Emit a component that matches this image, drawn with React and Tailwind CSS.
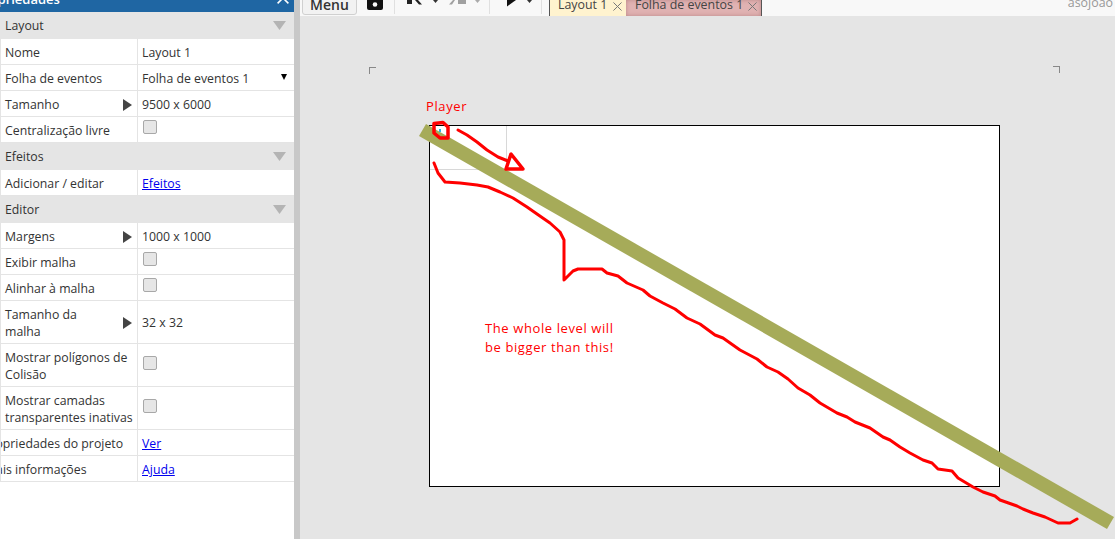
import React from 'react';

const font = 'font-["Open_Sans","Liberation_Sans",sans-serif]';

const Caret = () => (
    <svg width="10" height="12" viewBox="0 0 10 12" className="shrink-0">
        <path d="M1 0 L10 6 L1 12 Z" fill="#444" />
    </svg>
);

const Check = () => (
    <span className="block h-[14px] w-[14px] rounded-[2px] border border-[#a8a8a8] bg-[#e6e6e6]" />
);

const Cross = ({ color = '#777', size = 9, width = 1.1 }) => (
    <svg width={size} height={size} viewBox="0 0 10 10" className="shrink-0">
        <path d="M0.5 0.5 L9.5 9.5 M9.5 0.5 L0.5 9.5" stroke={color} strokeWidth={width} fill="none" />
    </svg>
);

const Section = ({ title }) => (
    <div className="flex h-[27px] items-center justify-between border-b border-[#e5e5e5] bg-[#e5e5e5] pl-[5px] pr-2 text-[#333]">
        <span className="mt-[2px]">{title}</span>
        <svg width="13" height="9" viewBox="0 0 13 9"><path d="M0 0 H13 L6.5 9 Z" fill="#b4b4b4" /></svg>
    </div>
);

const Row = ({ label, children, caret, h = 'h-[26px]', clip }) => (
    <div className={`flex ${h} border-b border-[#e4e4e4] bg-white`}>
        <div className="flex w-[138px] shrink-0 items-center justify-between overflow-hidden border-x border-[#e4e4e4] pl-[4px] pr-[5px] pt-[2px] leading-[17px] text-[#333]">
            <span
                className={clip ? 'whitespace-nowrap' : caret ? 'max-w-[100px]' : 'w-[130px] shrink-0'}
                style={clip ? { marginLeft: clip } : undefined}
            >
                {label}
            </span>
            {caret && <Caret />}
        </div>
        <div className="flex min-w-0 flex-1 items-center pl-[4px] text-[#333]">{children}</div>
    </div>
);

// values sit a little under the centre of their row
const Value = ({ children, link }) => (
    <span className={`mt-[4px] ${link ? 'text-[#0000ee] underline' : ''}`}>{children}</span>
);

const PropertiesPanel = () => (
    <div className="flex w-[294px] shrink-0 flex-col overflow-hidden bg-white text-[12.3px]">
        <div className="flex h-[12px] items-end justify-between overflow-hidden bg-[#1f66a3] pr-[5px] text-[13px] leading-[17px] text-white">
            <span className="-ml-[24px] mb-[4px] whitespace-nowrap font-semibold">Propriedades</span>
            <span className="mb-[8px]"><Cross color="#fff" size={12} width={1.3} /></span>
        </div>
        <Section title="Layout" />
        <Row label="Nome"><Value>Layout 1</Value></Row>
        <Row label="Folha de eventos">
            <span className="mt-[4px] flex w-full items-center justify-between pr-[7px]">
                <span>Folha de eventos 1</span>
                <svg width="6" height="6" viewBox="0 0 6 6" className="-mt-[6px]"><path d="M0 0 H6 L3 6 Z" fill="#000" /></svg>
            </span>
        </Row>
        <Row label="Tamanho" caret><Value>9500 x 6000</Value></Row>
        <Row label="Centralização livre"><span className="mb-[6px] ml-[1px]"><Check /></span></Row>
        <Section title="Efeitos" />
        <Row label="Adicionar / editar"><Value link>Efeitos</Value></Row>
        <Section title="Editor" />
        <Row label="Margens" caret><Value>1000 x 1000</Value></Row>
        <Row label="Exibir malha"><span className="mb-[6px] ml-[1px]"><Check /></span></Row>
        <Row label="Alinhar à malha"><span className="mb-[6px] ml-[1px]"><Check /></span></Row>
        <Row label="Tamanho da malha" caret h="h-[43px]"><span className="mt-[2px]">32 x 32</span></Row>
        <Row label="Mostrar polígonos de Colisão" h="h-[43px]"><span className="mb-[4px] ml-[1px]"><Check /></span></Row>
        <Row label="Mostrar camadas transparentes inativas" h="h-[43px]"><span className="mb-[4px] ml-[1px]"><Check /></span></Row>
        <Row label="Propriedades do projeto" clip="-22px"><Value link>Ver</Value></Row>
        <Row label="Mais informações" clip="-20px"><Value link>Ajuda</Value></Row>
    </div>
);

const Separator = ({ className }) => <div className={`h-[14px] w-px bg-[#e0e0e0] ${className}`} />;

const Toolbar = () => (
    <div className="flex h-[16px] items-start overflow-hidden bg-[#f8f8f8] text-[12.4px]">
        <div className="-mt-[10px] ml-[2px] flex h-[25px] w-[55px] items-center justify-center rounded-[3px] border border-[#d0d0d0] bg-[#f2f2f2] pt-[3px] text-[14px] font-semibold text-[#333]">
            Menu
        </div>
        {/* save */}
        <svg width="16" height="10" viewBox="0 0 16 10" className="ml-[10px]">
            <path d="M0 0 H16 V8 Q16 10 14 10 H2 Q0 10 0 8 Z" fill="#111" />
            <circle cx="8" cy="4.5" r="2.3" fill="#f8f8f8" />
        </svg>
        <Separator className="ml-[11px]" />
        {/* undo */}
        <svg width="32" height="5" viewBox="0 0 32 5" className="ml-[12px]">
            <path d="M0 0 H5 V4 H0 Z M8 0 H11 L15 4.5 H12 Z" fill="#222" />
            <path d="M26 0 H31 L28.5 3 Z" fill="#333" />
        </svg>
        {/* redo */}
        <svg width="32" height="5" viewBox="0 0 32 5" className="ml-[10px]">
            <path d="M0 4.5 L4 0 H6 L3 4.5 Z M9 0 H17 V4 H9 Z" fill="#a0a0a0" />
            <path d="M26 0 H31 L28.5 3 Z" fill="#aaa" />
        </svg>
        <Separator className="ml-[8px]" />
        {/* play */}
        <svg width="27" height="7" viewBox="0 0 27 7" className="ml-[17px]">
            <path d="M0 0 H9 L0 6.5 Z" fill="#111" />
            <path d="M20 0 H25 L22.5 3 Z" fill="#333" />
        </svg>
        <Separator className="ml-[7px]" />
        <div className="ml-[7px] flex h-full w-[77px] items-start gap-[6px] border-l border-[#555] bg-[#fff3cf] pl-[8px] text-[#444]">
            <span className="-mt-[3px] leading-[16px]">Layout 1</span>
            <span className="mt-[2px]"><Cross /></span>
        </div>
        <div className="flex h-full w-[136px] items-start gap-[5px] border-r border-[#555] bg-[#e0b2b2] pl-[9px] text-[#444] shadow-[inset_0_0_4px_#b88]">
            <span className="-mt-[3px] leading-[16px]">Folha de eventos 1</span>
            <span className="mt-[2px]"><Cross /></span>
        </div>
        <span className="-mt-[5px] ml-auto mr-[2px] leading-[16px] text-[#999]">asojoão</span>
    </div>
);

const Canvas = () => (
    <div className="relative flex-1 overflow-hidden bg-[#e5e5e5]">
        {/* corner marks */}
        <div className="absolute left-[69px] top-[51px] h-[7px] w-[7px] border-l border-t border-[#888]" />
        <div className="absolute left-[753px] top-[50px] h-[7px] w-[7px] border-r border-t border-[#888]" />
        {/* level rect */}
        <div className="absolute left-[129px] top-[109px] h-[362px] w-[571px] border border-black bg-white">
            <div className="absolute left-0 top-0 h-[44px] w-[77px] border-b border-r border-[#d8d8d8]" />
        </div>
        {/* drawn on top, coords are page coords */}
        <svg className="absolute left-[-300px] top-[-16px]" width="1115" height="539">
            <polygon points="426,124 1114,517 1107,529 419,136" fill="#a6ab59" />
            <rect x="439" y="129" width="2" height="3" fill="#29b6e8" />
            <g fill="none" stroke="#ff0000" strokeLinejoin="round" strokeLinecap="round">
                <polygon strokeWidth="3.5" points="434,123.5 443,122.5 448,127 448,138 440,138 434,133" />
                <polyline strokeWidth="3" points="458,130 467,135 477,142 487,150 498,157 508,161" />
                <polygon strokeWidth="3.5" points="511,154 506,169 523,169" />
                <polyline strokeWidth="3" points="434,163 438,173 445,182 460,183 477,185 488,187 500,192 513,198 527,207 537,214 550,223 560,232 564,240 564,280 573,271 578,269 602,269 607,273 618,276 627,283 643,290 650,296 663,303 675,309 687,318 700,324 715,335 723,338 740,350 757,359 767,367 778,372 788,379 798,388 810,395 820,403 837,413 847,417 855,422 870,428 883,437 890,440 900,447 910,453 923,460 932,463 938,469 952,471 958,478 973,487 983,492 995,496 1000,500 1017,506 1023,509 1033,513 1045,517 1058,523 1070,523 1077,519" />
            </g>
        </svg>
        <span className="absolute left-[126px] top-[81px] text-[13px] tracking-[0.6px] text-[#ff0000]">Player</span>
        <p className="absolute left-[185px] top-[303px] text-[13px] leading-[19px] tracking-[0.6px] text-[#ff0000]">
            The whole level will<br />be bigger than this!
        </p>
    </div>
);

export default function App() {
    return (
        <div className={`flex h-[539px] w-[1115px] overflow-hidden ${font}`}>
            <PropertiesPanel />
            <div className="w-[6px] shrink-0 bg-[#c8c8c8]" />
            <div className="flex min-w-0 flex-1 flex-col">
                <Toolbar />
                <Canvas />
            </div>
        </div>
    );
}
